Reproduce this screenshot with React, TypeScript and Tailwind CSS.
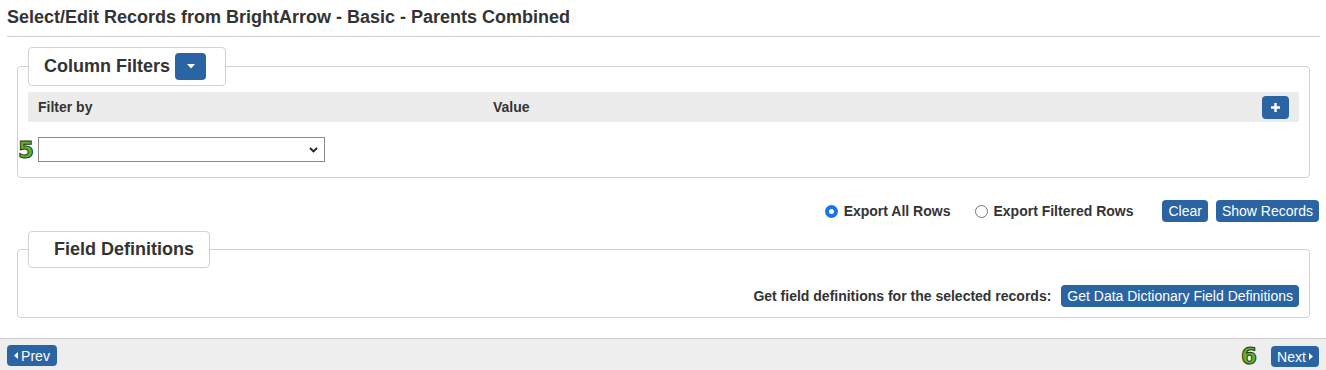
import React from "react";

const blueBtn =
  "inline-flex items-center justify-center rounded-[4px] bg-[#2b64a3] text-white text-[14px] font-normal leading-none";

function Annotation({ n }: { n: string }) {
  return (
    <span className="text-[23px] font-bold leading-none text-[#62b130] [-webkit-text-stroke:1px_#1d3b0c] font-['DejaVu_Sans',sans-serif]">
      {n}
    </span>
  );
}

function Radio({ checked }: { checked?: boolean }) {
  return checked ? (
    <span className="flex h-[13px] w-[13px] items-center justify-center rounded-full bg-[#1a73e8]">
      <span className="h-[5px] w-[5px] rounded-full bg-white" />
    </span>
  ) : (
    <span className="h-[13px] w-[13px] rounded-full border border-[#767676] bg-white" />
  );
}

export default function App() {
  return (
    <div className="flex h-[370px] w-full flex-col bg-white text-[#333] font-['Liberation_Sans',Arial,sans-serif]">
      <div className="ml-[7px] mr-[6px] border-b border-[#cfcfcf] pt-[7px] pb-[8px]">
        <h1 className="text-[18px] font-bold leading-[21px]">
          Select/Edit Records from BrightArrow - Basic - Parents Combined
        </h1>
      </div>

      <fieldset className="ml-[17px] mr-[16px] mt-[10px] rounded-[4px] border border-[#d2d2d2] px-[10px] pb-[15px]">
        <legend className="flex h-[39px] items-center gap-[5px] rounded-[4px] border border-[#d2d2d2] bg-white pl-[15px] pr-[19px]">
          <span className="text-[18px] font-bold">Column Filters</span>
          <span className={`${blueBtn} h-[27px] w-[31px]`}>
            <svg width="8" height="5" viewBox="0 0 8 5">
              <path d="M0 0h8L4 4.5z" fill="white" />
            </svg>
          </span>
        </legend>
        <div className="mt-[6px] flex h-[30px] items-center bg-[#ececec] pl-[10px] pr-[10px] text-[14px] font-bold">
          <span className="w-[455px]">Filter by</span>
          <span className="flex-1">Value</span>
          <span className={`${blueBtn} h-[23px] w-[27px]`}>
            <svg width="9" height="9" viewBox="0 0 9 9">
              <path d="M3.3 0h2.4v3.3H9v2.4H5.7V9H3.3V5.7H0V3.3h3.3z" fill="white" />
            </svg>
          </span>
        </div>
        <div className="relative mt-[15px] flex items-center pl-[10px]">
          <span className="absolute left-[-10px] top-[2px]">
            <Annotation n="5" />
          </span>
          <div className="flex h-[25px] w-[287px] items-center justify-end border border-[#8a8a8a] bg-white pr-[6px]">
            <svg width="9" height="6" viewBox="0 0 9 6">
              <path d="M1 1l3.5 3.5L8 1" stroke="#222" strokeWidth="1.8" fill="none" />
            </svg>
          </div>
        </div>
      </fieldset>

      <div className="mt-[22px] mr-[7px] flex items-center justify-end text-[14px] font-bold">
        <span className="flex items-center gap-[6px]">
          <Radio checked />
          Export All Rows
        </span>
        <span className="ml-[25px] flex items-center gap-[5px]">
          <Radio />
          Export Filtered Rows
        </span>
        <span className={`${blueBtn} ml-[29px] h-[22px] px-[6px]`}>Clear</span>
        <span className={`${blueBtn} ml-[8px] h-[22px] px-[6px]`}>Show Records</span>
      </div>

      <fieldset className="ml-[17px] mr-[16px] mt-[9px] rounded-[4px] border border-[#d2d2d2] px-[10px] pb-[10px]">
        <legend className="flex h-[37px] items-center rounded-[4px] border border-[#d2d2d2] bg-white pl-[25px] pr-[15px]">
          <span className="text-[18px] font-bold">Field Definitions</span>
        </legend>
        <div className="mt-[17px] flex items-center justify-end gap-[10px] text-[14px] font-bold">
          <span>Get field definitions for the selected records:</span>
          <span className={`${blueBtn} h-[22px] px-[6px]`}>
            Get Data Dictionary Field Definitions
          </span>
        </div>
      </fieldset>

      <div className="mt-auto flex h-[32px] items-start justify-between border-t border-[#cfcfcf] bg-[#eeeeee] px-[7px] pt-[6px]">
        <span className={`${blueBtn} h-[21px] w-[50px] gap-[3px]`}>
          <svg width="4" height="7" viewBox="0 0 4 7">
            <path d="M4 0v7L0 3.5z" fill="white" />
          </svg>
          Prev
        </span>
        <div className="flex items-center gap-[14px]">
          <Annotation n="6" />
          <span className={`${blueBtn} h-[21px] w-[48px] gap-[3px]`}>
            Next
            <svg width="4" height="7" viewBox="0 0 4 7">
              <path d="M0 0v7l4-3.5z" fill="white" />
            </svg>
          </span>
        </div>
      </div>
    </div>
  );
}
